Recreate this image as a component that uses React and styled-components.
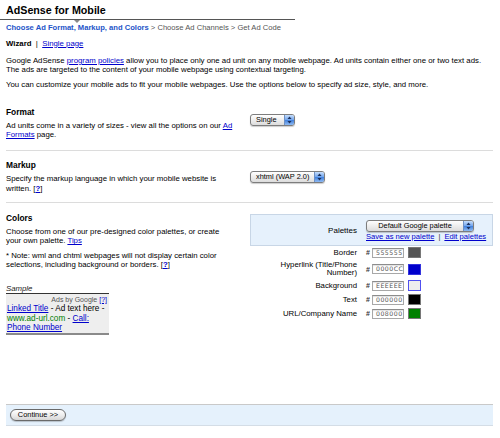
import React from 'react';
import styled, { createGlobalStyle } from 'styled-components';

const GlobalStyle = createGlobalStyle`
  html, body {
    margin: 0;
    padding: 0;
    background: #fff;
  }
  body {
    font-family: "Liberation Sans", Arial, sans-serif;
    font-size: 7.8px;
    color: #000;
  }
  * { box-sizing: border-box; }
`;

const Page = styled.div`
  width: 500px;
  height: 438px;
  padding: 0 7px 0 6px;
  overflow: hidden;
`;

const Header = styled.div`
  position: relative;
  margin-left: -6px;
  width: 295px;
  padding: 3px 0 2px 6px;
  border-bottom: 1px solid #555;

  &::after {
    content: '';
    position: absolute;
    left: 74px;
    bottom: -4px;
    border-left: 3px solid transparent;
    border-right: 3px solid transparent;
    border-top: 3px solid #888;
  }
`;

const Title = styled.h1`
  margin: 0;
  font-size: 10.7px;
  line-height: 14px;
  font-weight: bold;
  color: #000;
`;

const Crumbs = styled.div`
  margin-top: 2.5px;
  line-height: 9.5px;
  font-size: 7.6px;
  color: #555;
`;

const CrumbActive = styled.span`
  font-weight: bold;
  color: #2354c8;
`;

const ModeRow = styled.div`
  margin-top: 6.5px;
  line-height: 9.5px;
  b { color: #000; }
`;

const Link = styled.a`
  color: #0000cc;
  text-decoration: underline;
  cursor: pointer;
  font-weight: ${p => (p.$bold ? 'bold' : 'normal')};
`;

const Para = styled.p`
  margin: ${p => p.$top || 6}px 0 0;
  line-height: 9.3px;
`;

const Section = styled.div`
  display: grid;
  grid-template-columns: 230px 1fr;
  column-gap: 14px;
  margin-top: ${p => p.$mt || 0}px;
  padding: ${p => p.$pt}px 0 ${p => p.$pb}px;
  border-bottom: ${p => (p.$last ? 'none' : '1.5px solid #dcdcdc')};
`;

const Heading = styled.h2`
  margin: 0;
  font-size: 8.4px;
  line-height: 11px;
  font-weight: bold;
  color: #000;
`;

const Side = styled.div`
  padding-top: ${p => p.$pt || 0}px;
`;

const SelectBox = styled.div`
  display: inline-flex;
  align-items: stretch;
  width: ${p => p.$w}px;
  height: 12px;
  border: 1px solid #7d7d7d;
  border-radius: 3px;
  background: linear-gradient(#ffffff, #ececec 55%, #dcdcdc);
  box-shadow: 0 1px 1px rgba(0, 0, 0, 0.2);
  overflow: hidden;
  font-size: 7.4px;
  color: #000;
`;

const SelectText = styled.span`
  flex: 1;
  display: flex;
  align-items: center;
  justify-content: ${p => (p.$center ? 'center' : 'flex-start')};
  padding-left: ${p => (p.$center ? 0 : 5)}px;
  line-height: 10px;
  white-space: nowrap;
`;

const SelectArrows = styled.span`
  width: 10px;
  display: flex;
  align-items: center;
  justify-content: center;
  border-left: 1px solid #6e90c4;
  background: linear-gradient(#c6defc, #6fa3ec 50%, #3f7fdc 51%, #8fbaf2);
`;

const Select = ({ w, center, children }) => (
  <SelectBox $w={w}>
    <SelectText $center={center}>{children}</SelectText>
    <SelectArrows>
      <svg width="5" height="8" viewBox="0 0 5 8">
        <path d="M2.5 0.5 L4.5 3 L0.5 3 Z" fill="#1b2f5a" />
        <path d="M2.5 7.5 L4.5 5 L0.5 5 Z" fill="#1b2f5a" />
      </svg>
    </SelectArrows>
  </SelectBox>
);

const SampleLabel = styled.div`
  margin-top: 14px;
  width: 103px;
  font-style: italic;
  line-height: 9.3px;
  color: #222;
`;

const SampleAd = styled.div`
  width: 103px;
  border-top: 1px solid #333;
  border-bottom: 2px solid #8a8a8a;
  background: #eeeeee;
  padding: 1px 2px 1px 1px;
  font-size: 8.2px;
  line-height: 9.4px;
  color: #000;
`;

const AdsBy = styled.div`
  text-align: right;
  font-size: 7px;
  color: #555;
`;

const AdLink = styled.a`
  color: #0000cc;
  text-decoration: underline;
`;

const AdUrl = styled.span`
  color: #008000;
`;

const PaletteBox = styled.div`
  display: grid;
  grid-template-columns: 106px auto;
  column-gap: 9px;
  margin-top: 1px;
  padding: 5px 0 4px;
  border: 1px solid #c8d6e6;
  background: #e6f1fc;
`;

const PaletteLabel = styled.div`
  grid-row: span 2;
  align-self: center;
  text-align: right;
  font-size: 8px;
`;

const PaletteLinks = styled.div`
  line-height: 9px;
  font-size: 7.6px;
  color: #333;
  span { margin: 0 4px; }
`;

const ColorRow = styled.div`
  display: grid;
  grid-template-columns: 106px auto;
  column-gap: 9px;
  margin-left: 1px;
  height: ${p => (p.$tall ? 19 : 14)}px;
  align-items: center;
`;

const RowLabel = styled.div`
  text-align: right;
  font-size: 7.8px;
  line-height: 8.4px;
`;

const RowControls = styled.div`
  display: flex;
  align-items: center;
`;

const Hash = styled.span`
  width: 6px;
  font-weight: bold;
  font-size: 7px;
  color: #333;
`;

const HexInput = styled.div`
  width: 32px;
  height: 10px;
  border: 1px solid #a8a8a8;
  border-top-color: #8c8c8c;
  background: #fff;
  box-shadow: inset 0 1px 1px rgba(0, 0, 0, 0.12);
  font-size: 6.2px;
  letter-spacing: 0.5px;
  line-height: 8px;
  padding-left: 3px;
  color: #555;
  font-family: "DejaVu Sans", sans-serif;
`;

const Swatch = styled.div`
  width: 13px;
  height: 11px;
  margin-left: 4px;
  background: ${p => p.$color};
  border: 1px solid ${p => p.$border || '#777'};
`;

const FooterBar = styled.div`
  margin-top: 69px;
  height: 22px;
  border-top: 1.5px solid #c9c9c9;
  border-bottom: 1px solid #d4dde6;
  background: #e5f1fc;
  padding: 3.5px 0 0 4px;
`;

const ContinueButton = styled.button`
  width: 56px;
  height: 12px;
  padding: 0;
  border: 1px solid #6a6a6a;
  border-radius: 6px;
  background: linear-gradient(#ffffff, #eeeeee 50%, #d6d6d6);
  box-shadow: 0 1px 1px rgba(0, 0, 0, 0.2);
  font-family: "Liberation Sans", Arial, sans-serif;
  font-size: 7.4px;
  line-height: 10px;
  color: #000;
`;

const colorRows = [
  { label: 'Border', hex: '555555', color: '#555555' },
  { label: 'Hyperlink (Title/Phone Number)', hex: '0000CC', color: '#0000cc', border: '#3333dd', tall: true },
  { label: 'Background', hex: 'EEEEEE', color: '#eeeeee', border: '#5050f0' },
  { label: 'Text', hex: '000000', color: '#000000' },
  { label: 'URL/Company Name', hex: '008000', color: '#008000' },
];

export default function App() {
  return (
    <Page>
      <GlobalStyle />
      <Header>
        <Title>AdSense for Mobile</Title>
      </Header>
      <Crumbs>
        <CrumbActive>Choose Ad Format, Markup, and Colors</CrumbActive> &gt; Choose Ad Channels &gt; Get Ad Code
      </Crumbs>
      <ModeRow>
        <b>Wizard</b> &nbsp;|&nbsp; <Link>Single page</Link>
      </ModeRow>
      <Para $top={7.8}>
        Google AdSense <Link>program policies</Link> allow you to place only one ad unit on any mobile webpage. Ad units contain either one or two text ads.
        <br />
        The ads are targeted to the content of your mobile webpage using contextual targeting.
      </Para>
      <Para $top={6}>
        You can customize your mobile ads to fit your mobile webpages. Use the options below to specify ad size, style, and more.
      </Para>

      <Section $mt={8} $pt={9} $pb={10.5}>
        <div>
          <Heading>Format</Heading>
          <Para $top={3}>
            Ad units come in a variety of sizes - view all the options on our <Link>Ad Formats</Link> page.
          </Para>
        </div>
        <Side $pt={7}>
          <Select w={45}>Single</Select>
        </Side>
      </Section>

      <Section $pt={9} $pb={9.5}>
        <div>
          <Heading>Markup</Heading>
          <Para $top={3.5}>
            Specify the markup language in which your mobile website is written. [<Link $bold>?</Link>]
          </Para>
        </div>
        <Side $pt={11}>
          <Select w={75}>xhtml (WAP 2.0)</Select>
        </Side>
      </Section>

      <Section $pt={9.5} $pb={0} $last>
        <div>
          <Heading>Colors</Heading>
          <Para $top={3}>
            Choose from one of our pre-designed color palettes, or create your own palette. <Link>Tips</Link>
          </Para>
          <Para $top={5.5}>
            * Note: wml and chtml webpages will not display certain color selections, including background or borders. [<Link $bold>?</Link>]
          </Para>
          <SampleLabel>Sample</SampleLabel>
          <SampleAd>
            <AdsBy>
              Ads by Google <AdLink>[?]</AdLink>
            </AdsBy>
            <AdLink>Linked Title</AdLink> - Ad text here - <AdUrl>www.ad-url.com</AdUrl> - <AdLink>Call: Phone Number</AdLink>
          </SampleAd>
        </div>
        <Side>
          <PaletteBox>
            <PaletteLabel>Palettes</PaletteLabel>
            <div>
              <Select w={108} center>
                Default Google palette
              </Select>
            </div>
            <PaletteLinks>
              <Link>Save as new palette</Link>
              <span>|</span>
              <Link>Edit palettes</Link>
            </PaletteLinks>
          </PaletteBox>
          {colorRows.map(row => (
            <ColorRow key={row.label} $tall={row.tall}>
              <RowLabel>{row.label}</RowLabel>
              <RowControls>
                <Hash>#</Hash>
                <HexInput>{row.hex}</HexInput>
                <Swatch $color={row.color} $border={row.border} />
              </RowControls>
            </ColorRow>
          ))}
        </Side>
      </Section>

      <FooterBar>
        <ContinueButton>Continue &gt;&gt;</ContinueButton>
      </FooterBar>
    </Page>
  );
}
